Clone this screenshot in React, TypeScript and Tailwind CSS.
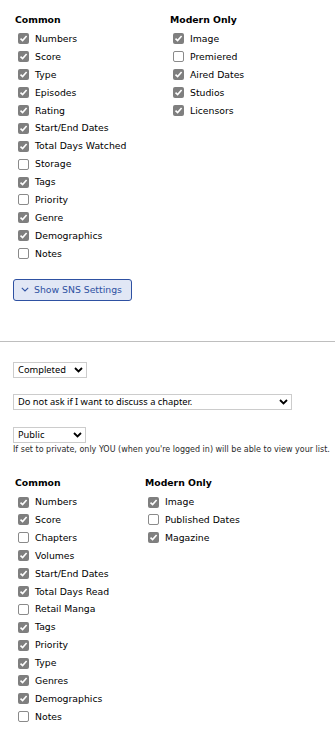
import React from 'react';

type Item = { label: string; checked: boolean };

const animeCommon: Item[] = [
  { label: 'Numbers', checked: true },
  { label: 'Score', checked: true },
  { label: 'Type', checked: true },
  { label: 'Episodes', checked: true },
  { label: 'Rating', checked: true },
  { label: 'Start/End Dates', checked: true },
  { label: 'Total Days Watched', checked: true },
  { label: 'Storage', checked: false },
  { label: 'Tags', checked: true },
  { label: 'Priority', checked: false },
  { label: 'Genre', checked: true },
  { label: 'Demographics', checked: true },
  { label: 'Notes', checked: false },
];

const animeModern: Item[] = [
  { label: 'Image', checked: true },
  { label: 'Premiered', checked: false },
  { label: 'Aired Dates', checked: true },
  { label: 'Studios', checked: true },
  { label: 'Licensors', checked: true },
];

const mangaCommon: Item[] = [
  { label: 'Numbers', checked: true },
  { label: 'Score', checked: true },
  { label: 'Chapters', checked: false },
  { label: 'Volumes', checked: true },
  { label: 'Start/End Dates', checked: true },
  { label: 'Total Days Read', checked: true },
  { label: 'Retail Manga', checked: false },
  { label: 'Tags', checked: true },
  { label: 'Priority', checked: true },
  { label: 'Type', checked: true },
  { label: 'Genres', checked: true },
  { label: 'Demographics', checked: true },
  { label: 'Notes', checked: false },
];

const mangaModern: Item[] = [
  { label: 'Image', checked: true },
  { label: 'Published Dates', checked: false },
  { label: 'Magazine', checked: true },
];

function Box({ checked }: { checked: boolean }) {
  if (checked) {
    return (
      <span className="w-[11px] h-[11px] rounded-[2px] bg-[#7f7f7f] flex items-center justify-center shrink-0">
        <svg width="9" height="9" viewBox="0 0 9 9">
          <path d="M1.5 4.6 L3.6 6.6 L7.6 2" stroke="#fff" strokeWidth="1.6" fill="none" />
        </svg>
      </span>
    );
  }
  return <span className="w-[11px] h-[11px] rounded-[2px] border border-[#8a8a8a] bg-white shrink-0" />;
}

function Column({ title, items, width }: { title: string; items: Item[]; width?: string }) {
  return (
    <div className={width}>
      <div className="h-[21px] flex items-center pl-[2px] font-bold">{title}</div>
      {items.map(item => (
        <label key={item.label} className="h-[17.9px] flex items-center gap-[6px] pl-[5px]">
          <Box checked={item.checked} />
          <span>{item.label}</span>
        </label>
      ))}
    </div>
  );
}

function Chevron() {
  return (
    <svg width="9" height="6" viewBox="0 0 9 6" className="absolute right-[4px] top-1/2 -translate-y-1/2 pointer-events-none">
      <path d="M1 1 L4.5 4.5 L8 1" stroke="#000" strokeWidth="1.8" fill="none" />
    </svg>
  );
}

function Select({ value, width, options }: { value: string; width: string; options: string[] }) {
  return (
    <div className={`relative h-[16px] ${width}`}>
      <select
        defaultValue={value}
        className="appearance-none w-full h-full border border-[#cccccc] bg-white pl-[4px] pr-[14px] text-[9.3px] leading-[14px] text-black font-['Noto_Sans',sans-serif] outline-none"
      >
        {options.map(o => (
          <option key={o}>{o}</option>
        ))}
      </select>
      <Chevron />
    </div>
  );
}

export default function App() {
  return (
    <div className="w-[335px] min-h-[729px] bg-white text-black text-[9.3px] font-['DejaVu_Sans',Verdana,sans-serif]">
      {/* Anime list columns */}
      <div className="pl-[13px] pt-[9px]">
        <div className="flex">
          <Column title="Common" items={animeCommon} width="w-[155px]" />
          <Column title="Modern Only" items={animeModern} />
        </div>
        <button className="mt-[16px] w-[119px] h-[22px] flex items-center gap-[5px] pl-[7px] border border-[#2e51a2] rounded-[3px] bg-[#e1e7f5] text-[#2e51a2]">
          <svg width="8" height="5" viewBox="0 0 8 5">
            <path d="M0.8 0.8 L4 4 L7.2 0.8" stroke="#2e51a2" strokeWidth="1.1" fill="none" />
          </svg>
          <span>Show SNS Settings</span>
        </button>
      </div>

      <div className="mt-[40px] border-t border-[#bebebe]" />

      {/* Manga list settings */}
      <div className="pl-[13px]">
        <div className="mt-[20px]">
          <Select value="Completed" width="w-[74px]" options={['Watching', 'Completed', 'On-Hold', 'Dropped', 'Plan to Watch']} />
        </div>
        <div className="mt-[16px]">
          <Select
            value="Do not ask if I want to discuss a chapter."
            width="w-[279px]"
            options={['Do not ask if I want to discuss a chapter.', 'Ask me if I want to discuss a chapter.']}
          />
        </div>
        <div className="mt-[17px]">
          <Select value="Public" width="w-[73px]" options={['Public', 'Private', 'Friends Only']} />
        </div>
        <p className="h-[12px] mt-[1px] leading-[12px] text-[8px] whitespace-nowrap text-[#2a2a2a]">
          If set to private, only YOU (when you're logged in) will be able to view your list.
        </p>
        <div className="flex mt-[16.5px]">
          <Column title="Common" items={mangaCommon} width="w-[130px]" />
          <Column title="Modern Only" items={mangaModern} />
        </div>
      </div>
    </div>
  );
}
